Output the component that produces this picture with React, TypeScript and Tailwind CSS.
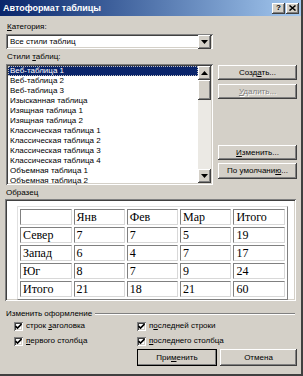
import React from 'react';

const STYLES = [
  'Веб-таблица 1',
  'Веб-таблица 2',
  'Веб-таблица 3',
  'Изысканная таблица',
  'Изящная таблица 1',
  'Изящная таблица 2',
  'Классическая таблица 1',
  'Классическая таблица 2',
  'Классическая таблица 3',
  'Классическая таблица 4',
  'Объемная таблица 1',
  'Объемная таблица 2',
];

const ROWS = [
  ['', 'Янв', 'Фев', 'Мар', 'Итого'],
  ['Север', '7', '7', '5', '19'],
  ['Запад', '6', '4', '7', '17'],
  ['Юг', '8', '7', '9', '24'],
  ['Итого', '21', '18', '21', '60'],
];

const raised =
  'bg-[#d4d0c8] shadow-[inset_-1px_-1px_#404040,inset_1px_1px_#ffffff,inset_-2px_-2px_#808080,inset_2px_2px_#d4d0c8]';
const sunken =
  'bg-white shadow-[inset_1px_1px_#808080,inset_-1px_-1px_#ffffff,inset_2px_2px_#404040,inset_-2px_-2px_#d4d0c8]';

function Btn({ children, disabled, isDefault, className = '' }: { children: React.ReactNode; disabled?: boolean; isDefault?: boolean; className?: string }) {
  return (
    <div
      className={`flex items-center justify-center text-[8px] leading-[10px] ${raised} ${
        isDefault ? 'outline outline-1 outline-black -outline-offset-1' : ''
      } ${disabled ? 'text-[#808080] [text-shadow:1px_1px_#ffffff]' : 'text-black'} ${className}`}
    >
      {children}
    </div>
  );
}

function Arrow({ up }: { up?: boolean }) {
  return (
    <div className={`w-[13px] h-[14px] flex items-center justify-center ${raised}`}>
      <svg width="7" height="4" viewBox="0 0 7 4">
        <path d={up ? 'M3.5 0 L7 4 L0 4 Z' : 'M0 0 L7 0 L3.5 4 Z'} fill="#000" />
      </svg>
    </div>
  );
}

function Check({ children }: { children: React.ReactNode }) {
  return (
    <div className="flex items-center gap-[3px] h-[10px]">
      <div className={`w-[9px] h-[9px] flex items-center justify-center ${sunken}`}>
        <svg width="7" height="7" viewBox="0 0 7 7">
          <path d="M0.5 3 L2.5 5 L6.5 1" stroke="#000" strokeWidth="1.6" fill="none" />
        </svg>
      </div>
      <span className="text-[8px] leading-[10px]">{children}</span>
    </div>
  );
}

export default function App() {
  return (
    <div className="w-[303px] h-[376px] bg-[#d4d0c8] border-r-2 border-b-2 border-r-[#404040] border-b-[#404040] font-['Liberation_Sans',Arial,sans-serif] text-black overflow-hidden">
      {/* Title bar */}
      <div className="h-[16px] bg-gradient-to-r from-[#0a246a] to-[#a6caf0] flex items-center pl-[3px] pr-[2px]">
        <span className="text-white font-bold text-[9px] leading-[10px] flex-1">Автоформат таблицы</span>
        <div className={`w-[13px] h-[11px] flex items-center justify-center text-[8px] font-bold leading-none ${raised}`}>?</div>
        <div className={`ml-[1px] w-[13px] h-[11px] flex items-center justify-center ${raised}`}>
          <svg width="7" height="6" viewBox="0 0 7 6">
            <path d="M0.5 0.5 L6.5 5.5 M6.5 0.5 L0.5 5.5" stroke="#000" strokeWidth="1.5" />
          </svg>
        </div>
      </div>

      <div className="pl-[6px] pr-[4px]">
        <div className="mt-[6px] text-[8px] leading-[10px] pl-[1px]">
          <span className="underline">К</span>атегория:
        </div>
        <div className={`mt-[2px] w-[207px] h-[15px] flex items-center p-[2px] ${sunken}`}>
          <span className="flex-1 text-[8px] leading-[10px] pl-[2px]">Все стили таблиц</span>
          <Arrow />
        </div>

        <div className="mt-[3px] text-[8px] leading-[10px] pl-[1px]">
          Стили <span className="underline">т</span>аблиц:
        </div>
        <div className="mt-[2px] flex gap-[5px]">
          <div className={`w-[207px] h-[121px] flex p-[2px] ${sunken}`}>
            <div className="flex-1 flex flex-col">
              {STYLES.map((s, i) => (
                <div
                  key={s}
                  className={`h-[10px] text-[8px] leading-[10px] pl-[2px] ${
                    i === 0 ? 'bg-[#0a246a] text-white outline outline-1 outline-dotted outline-[#c0c0c0] -outline-offset-1' : ''
                  }`}
                >
                  {s}
                </div>
              ))}
            </div>
            <div className="w-[13px] flex flex-col bg-[#ebe9e4]">
              <Arrow up />
              <div className={`h-[20px] ${raised}`} />
              <div className="flex-1" />
              <Arrow />
            </div>
          </div>
          <div className="w-[79px] flex flex-col">
            <Btn className="h-[15px] mt-[1px]">
              <span>
                Созд<span className="underline">а</span>ть...
              </span>
            </Btn>
            <Btn disabled className="h-[15px] mt-[4px]">
              <span>
                <span className="underline">У</span>далить...
              </span>
            </Btn>
            <div className="flex-1" />
            <Btn className="h-[15px]">
              <span>
                <span className="underline">И</span>зменить...
              </span>
            </Btn>
            <Btn className="h-[16px] mt-[3px] mb-[6px]">
              <span>
                По умолчани<span className="underline">ю</span>...
              </span>
            </Btn>
          </div>
        </div>

        <div className="mt-[3px] text-[8px] leading-[10px]">Образец</div>
        <div className={`mt-[1px] -ml-[1px] w-[291px] h-[102px] pt-[8px] pl-[12px] ${sunken}`}>
          <table className="border-separate border-spacing-[2px] border border-t-[#e0e0e0] border-l-[#e0e0e0] border-r-[#808080] border-b-[#808080] w-[271px] -ml-[0px] -mt-[1px] font-['Liberation_Serif','Times_New_Roman',serif] text-[12px] leading-[14px]">
            <tbody>
              {ROWS.map((r, ri) => (
                <tr key={ri}>
                  {r.map((c, ci) => (
                    <td
                      key={ci}
                      className="h-[16px] w-[52px] px-[2px] py-0 border border-t-[#808080] border-l-[#808080] border-r-[#d8d8d8] border-b-[#d8d8d8] align-middle"
                    >
                      {c}
                    </td>
                  ))}
                </tr>
              ))}
            </tbody>
          </table>
        </div>

        <div className="mt-[8px] flex items-center gap-[3px]">
          <span className="text-[8px] leading-[10px]">Изменить оформление</span>
          <div className="flex-1 h-[2px] border-t border-t-[#808080] border-b border-b-white mr-[2px]" />
        </div>
        <div className="mt-[2px] grid grid-cols-[123px_1fr] gap-y-[5px] pl-[8px]">
          <Check>
            строк <span className="underline">з</span>аголовка
          </Check>
          <Check>
            п<span className="underline">о</span>следней строки
          </Check>
          <Check>
            <span className="underline">п</span>ервого столбца
          </Check>
          <Check>
            <span className="underline">п</span>оследнего столбца
          </Check>
        </div>
        <div className="mt-[3px] flex justify-end gap-[3px] pr-[0px]">
          <Btn isDefault className="w-[80px] h-[17px]">
            <span>
              При<span className="underline">м</span>енить
            </span>
          </Btn>
          <Btn className="w-[77px] h-[17px]">Отмена</Btn>
        </div>
      </div>
    </div>
  );
}
